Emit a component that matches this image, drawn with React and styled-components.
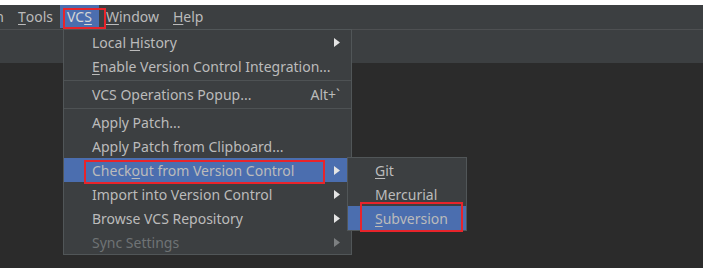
import React from "react";
import styled, { createGlobalStyle } from "styled-components";

const GlobalStyle = createGlobalStyle`
  html, body {
    margin: 0;
    padding: 0;
    background: #ffffff;
  }
  body {
    font-family: "Noto Sans", "Open Sans", sans-serif;
    font-size: 14px;
    color: #bbbbbb;
  }
`;

const Screen = styled.div`
  position: relative;
  margin-top: 5px;
  width: 703px;
  height: 263px;
  background: #2b2b2b;
  display: flex;
  flex-direction: column;
  overflow: hidden;
`;

const MenuBar = styled.div`
  height: 24px;
  background: #3c3f41;
  border-bottom: 1px solid #4e5052;
  display: flex;
  align-items: stretch;
`;

const MenuBarItem = styled.div`
  padding: 0 7px;
  display: flex;
  align-items: center;
  line-height: 23px;
  height: 23px;
  white-space: nowrap;
  background: ${(p) => (p.$active ? "#4b6eaf" : "transparent")};
  color: ${(p) => (p.$active ? "#d6d6d6" : "#bbbbbb")};
  margin-left: ${(p) => p.$shift || 0}px;
`;

const Toolbar = styled.div`
  height: 33px;
  background: #3c3f41;
`;

const Editor = styled.div`
  flex: 1;
  background: #2b2b2b;
`;

const Mn = styled.span`
  text-decoration: underline;
  text-underline-offset: 2px;
`;

const Dropdown = styled.div`
  position: absolute;
  left: ${(p) => p.$left}px;
  top: ${(p) => p.$top}px;
  width: ${(p) => p.$width}px;
  background: #3c3f41;
  border: 1px solid #515658;
  box-sizing: border-box;
  display: flex;
  flex-direction: column;
`;

const Row = styled.div`
  position: relative;
  height: 24px;
  display: flex;
  align-items: center;
  justify-content: space-between;
  padding: ${(p) => p.$pad || "0 11px 0 28px"};
  white-space: nowrap;
  background: ${(p) => (p.$selected ? "#4b6eaf" : "transparent")};
  color: ${(p) => (p.$disabled ? "#6f7375" : "#bbbbbb")};
`;

const Separator = styled.div`
  height: 4px;
  display: flex;
  align-items: center;
  &::after {
    content: "";
    flex: 1;
    height: 1px;
    background: #4e5254;
  }
`;

const Shortcut = styled.span`
  color: #bbbbbb;
`;

const Arrow = ({ dim }) => (
  <svg width="6" height="9" viewBox="0 0 6 9">
    <polygon points="0,0 6,4.5 0,9" fill={dim ? "#7c7f81" : "#e4e4e4"} />
  </svg>
);

const RedMark = styled.div`
  position: absolute;
  left: ${(p) => p.$x}px;
  top: ${(p) => p.$y}px;
  width: ${(p) => p.$w}px;
  height: ${(p) => p.$h}px;
  border: 2px solid #e8242b;
  box-sizing: border-box;
  pointer-events: none;
`;

export default function App() {
  return (
    <>
      <GlobalStyle />
      <Screen>
        <MenuBar>
          <MenuBarItem $shift={-29}>Run</MenuBarItem>
          <MenuBarItem>
            <Mn>T</Mn>ools
          </MenuBarItem>
          <MenuBarItem $active>
            VC<Mn>S</Mn>
          </MenuBarItem>
          <MenuBarItem>
            <Mn>W</Mn>indow
          </MenuBarItem>
          <MenuBarItem>
            <Mn>H</Mn>elp
          </MenuBarItem>
        </MenuBar>
        <Toolbar />
        <Editor />

        <Dropdown $left={63} $top={24} $width={289}>
          <Row>
            <span>
              Local <Mn>H</Mn>istory
            </span>
            <Arrow />
          </Row>
          <Row>
            <span>
              <Mn>E</Mn>nable Version Control Integration...
            </span>
          </Row>
          <Separator />
          <Row>
            <span>VCS Operations Popup...</span>
            <Shortcut>Alt+`</Shortcut>
          </Row>
          <Separator />
          <Row>
            <span>Apply Patch...</span>
          </Row>
          <Row>
            <span>Apply Patch from Clipboard...</span>
          </Row>
          <Row $selected>
            <span>
              Check<Mn>o</Mn>ut from Version Control
            </span>
            <Arrow />
            <Dropdown $left={283} $top={-1} $width={120}>
              <Row $pad="0 10px 0 27px">
                <span>
                  <Mn>G</Mn>it
                </span>
              </Row>
              <Row $pad="0 10px 0 27px">
                <span>
                  <Mn>M</Mn>ercurial
                </span>
              </Row>
              <Row $pad="0 10px 0 27px" $selected>
                <span>
                  <Mn>S</Mn>ubversion
                </span>
              </Row>
            </Dropdown>
          </Row>
          <Row>
            <span>Import into Version Control</span>
            <Arrow />
          </Row>
          <Row>
            <span>Browse VCS Repository</span>
            <Arrow />
          </Row>
          <Row $disabled>
            <span>Sync Settings</span>
            <Arrow dim />
          </Row>
        </Dropdown>

        <RedMark $x={63} $y={3} $w={43} $h={21} />
        <RedMark $x={84} $y={155} $w={241} $h={24} />
        <RedMark $x={360} $y={197} $w={103} $h={30} />
      </Screen>
    </>
  );
}
